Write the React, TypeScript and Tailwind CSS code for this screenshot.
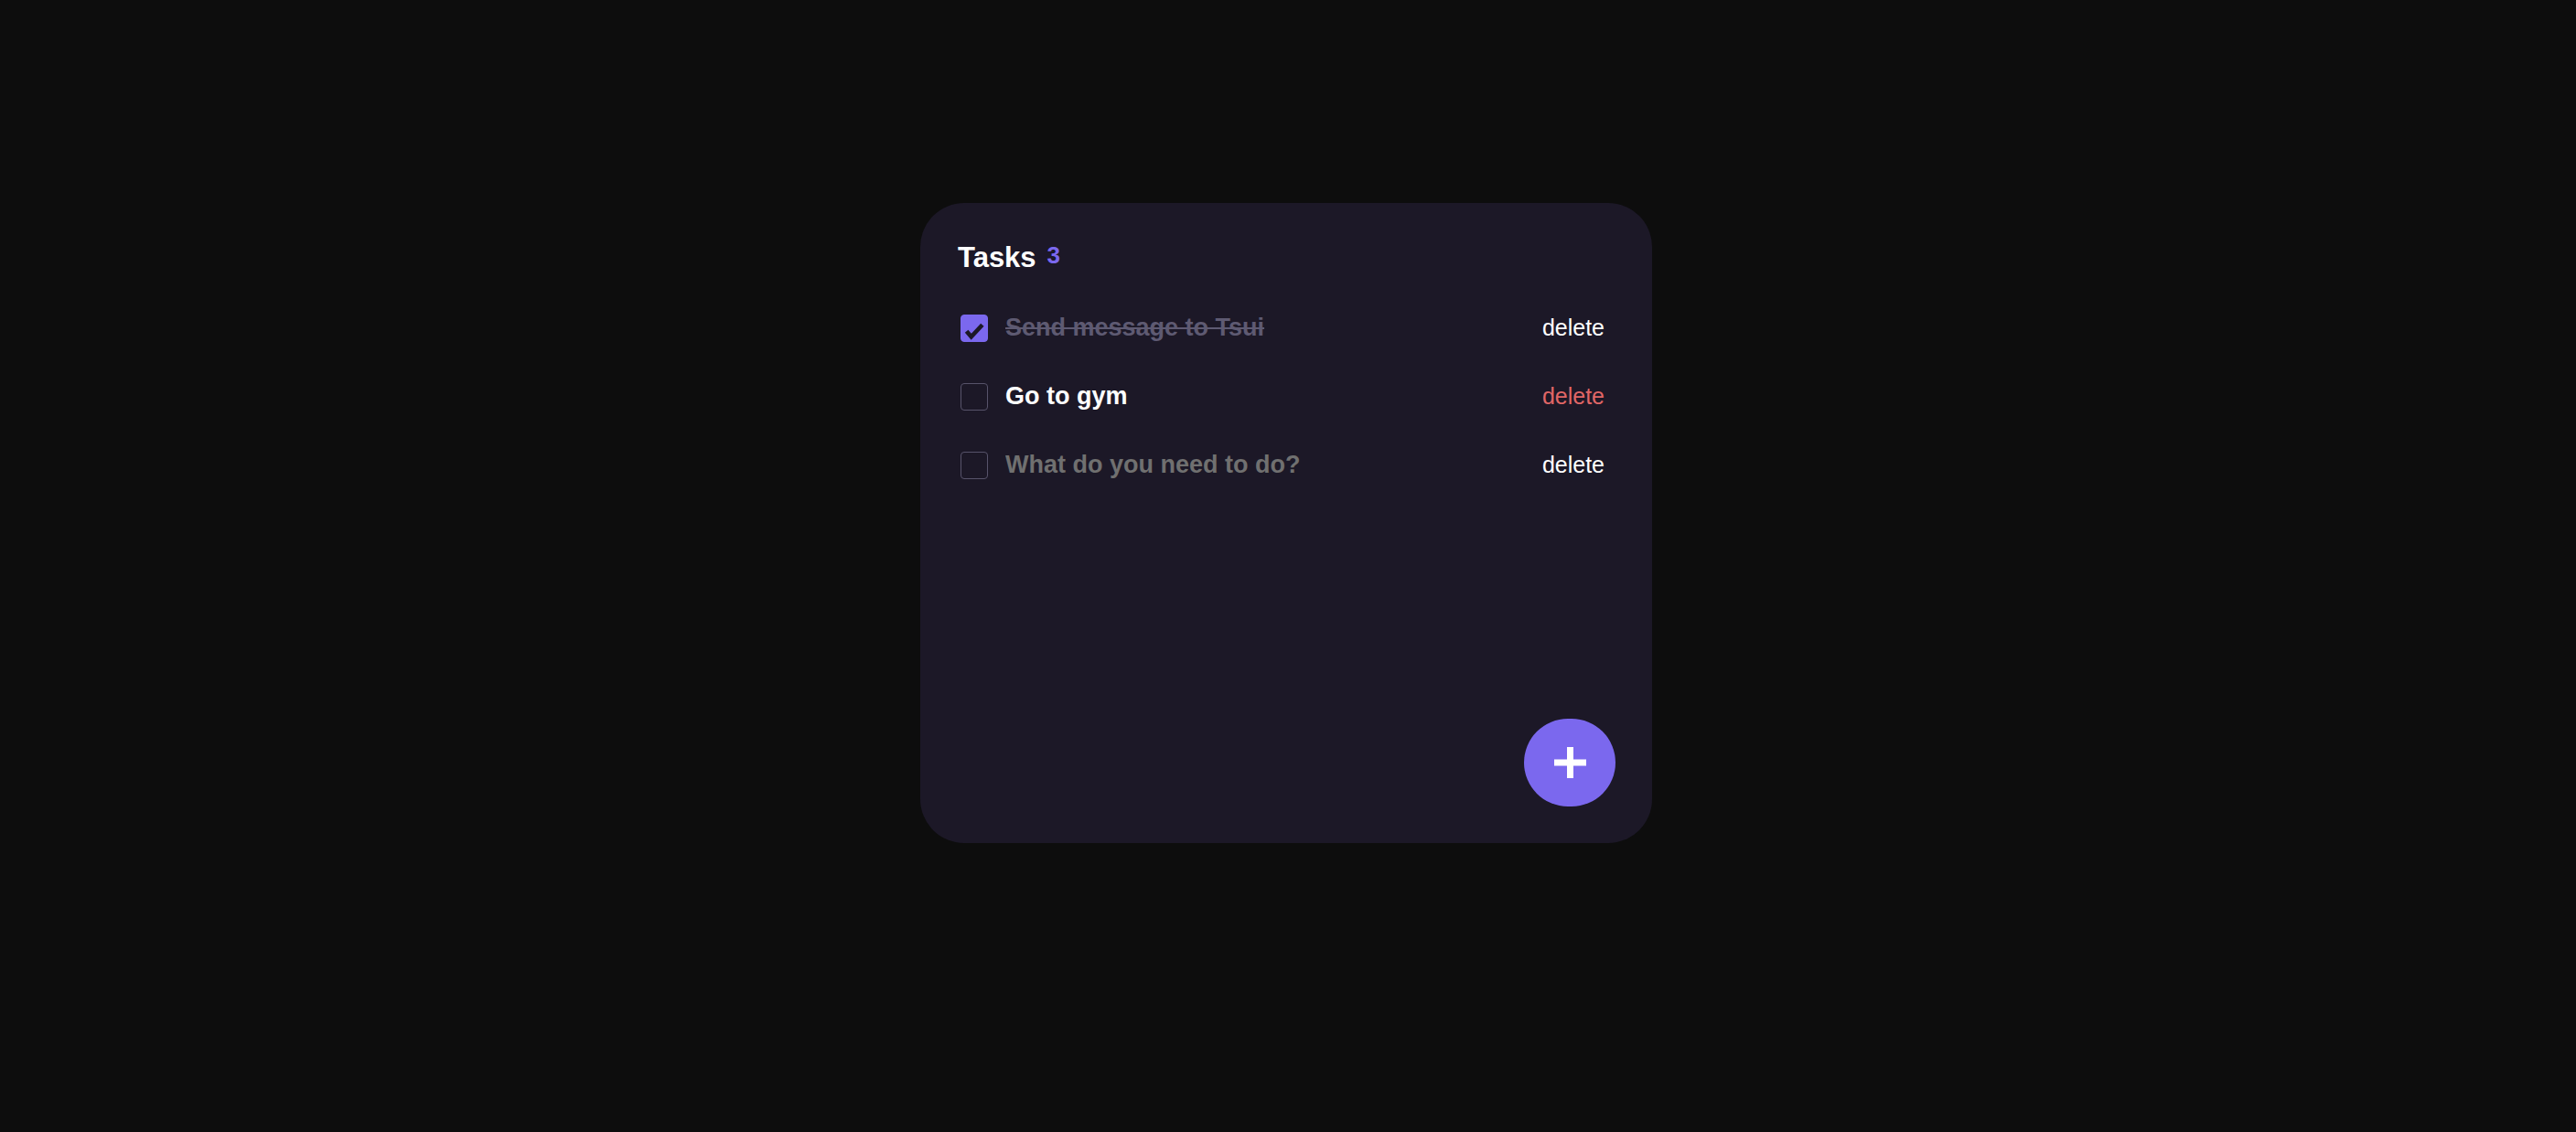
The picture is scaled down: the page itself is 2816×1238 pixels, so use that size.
import { useState } from "react";

type Task = { id: number; text: string; done: boolean };

const Check = () => (
  <svg viewBox="0 0 30 30" className="w-full h-full">
    <polyline
      points="6,18.5 11.5,25 24.5,11"
      fill="none"
      stroke="#1c1827"
      strokeWidth={5}
      strokeLinejoin="miter"
    />
  </svg>
);

const Row = ({ task, hot }: { task: Task; hot?: boolean }) => {
  return (
    <li className="flex h-[75px] items-center">
      <span
        className={
          task.done
            ? "ml-1 w-[30px] h-[30px] rounded-[4px] border border-[#7b68ee] bg-[#7b68ee] shrink-0"
            : "ml-1 w-[30px] h-[30px] rounded-[4px] border border-[#57536a] shrink-0"
        }
      >
        {task.done && <Check />}
      </span>
      {task.text ? (
        <span
          className={
            task.done
              ? "ml-[19px] text-[27px] font-bold text-[#5e5a72] line-through decoration-2"
              : "ml-[19px] text-[27px] font-bold text-white"
          }
        >
          {task.text}
        </span>
      ) : (
        <input
          className="ml-[19px] flex-1 bg-transparent text-[27px] font-bold text-white outline-none placeholder:text-[#707070]"
          placeholder="What do you need to do?"
        />
      )}
      <button
        className={
          hot
            ? "ml-auto px-3 text-[25px] text-[#e06666]"
            : "ml-auto px-3 text-[25px] text-white"
        }
      >
        delete
      </button>
    </li>
  );
};

export default function App() {
  const [tasks] = useState<Task[]>([
    { id: 1, text: "Send message to Tsui", done: true },
    { id: 2, text: "Go to gym", done: false },
    { id: 3, text: "", done: false },
  ]);

  return (
    <div
      className="min-h-screen bg-[#0d0d0d] pt-[222px] pr-1 flex justify-center"
      style={{ fontFamily: '"Liberation Sans", Arial, sans-serif' }}
    >
      <div className="w-[800px] h-[700px] rounded-[48px] bg-[#1c1827] p-10 flex flex-col">
        <div className="flex items-start h-9 pt-0.5 pl-px">
          <h1 className="text-[31px] leading-9 font-bold text-white">Tasks</h1>
          <span className="ml-3 mt-0.5 text-[26px] leading-none font-bold text-[#7b68ee]">
            {tasks.length}
          </span>
        </div>
        <ul className="mt-[23px]">
          {tasks.map((t) => (
            <Row key={t.id} task={t} hot={t.id === 2} />
          ))}
        </ul>
        <button className="mt-auto self-end w-[100px] h-[96px] rounded-full bg-[#7b68ee] flex items-center justify-center">
          <svg viewBox="0 0 35 34" className="w-[35px] h-[34px]">
            <rect x="14" y="0" width="7" height="34" fill="#fff" />
            <rect x="0" y="13.5" width="35" height="7" fill="#fff" />
          </svg>
        </button>
      </div>
    </div>
  );
}
